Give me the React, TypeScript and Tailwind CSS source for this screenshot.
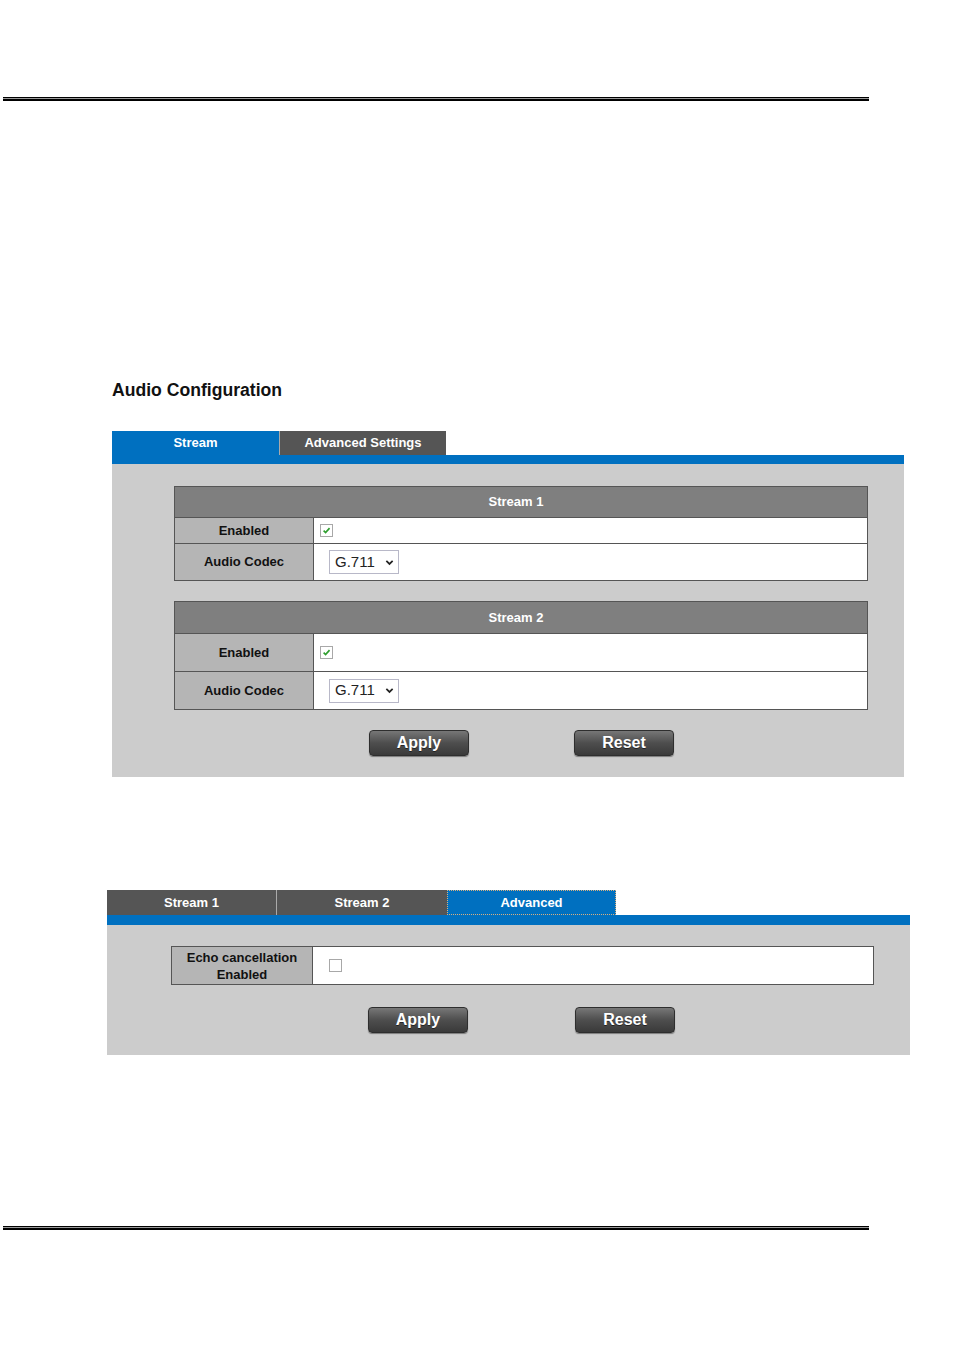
import React from "react"

const font = { fontFamily: '"Liberation Sans", Arial, sans-serif' }

function Rule() {
  return (
    <div className="ml-[3px] w-[866px]">
      <div className="h-px bg-black" />
      <div className="h-px bg-[#9a9a9a]" />
      <div className="h-[2px] bg-black" />
    </div>
  )
}

function Check({ checked }: { checked: boolean }) {
  return (
    <span className="inline-flex h-[13px] w-[13px] items-center justify-center border border-[#a8a8a8] bg-white">
      {checked && (
        <svg viewBox="0 0 10 10" className="h-[9px] w-[9px]">
          <path d="M1.8 5.2 L4 7.4 L8.4 2.4" fill="none" stroke="#2e9e2e" strokeWidth="1.8" />
        </svg>
      )}
    </span>
  )
}

function Codec() {
  return (
    <div className="flex h-[24px] w-[70px] items-center justify-between border border-[#b8b8c8] bg-white pl-[5px] pr-[4px] text-[15px] font-normal text-[#222]">
      <span>G.711</span>
      <svg viewBox="0 0 10 10" className="h-[9px] w-[9px]">
        <path d="M1.5 3.2 L5 6.6 L8.5 3.2" fill="none" stroke="#222" strokeWidth="1.9" />
      </svg>
    </div>
  )
}

function Btn({ label }: { label: string }) {
  return (
    <button className="h-[26px] w-[100px] rounded-[4px] border border-[#2e2e2e] bg-gradient-to-b from-[#777] via-[#4e4e4e] to-[#3a3a3a] text-[16px] font-bold text-white shadow-[0_1px_1px_rgba(0,0,0,0.4)] [text-shadow:0_1px_0_rgba(0,0,0,0.5)]">
      {label}
    </button>
  )
}

function StreamTable({ title, headerH, enabledH, codecH }: { title: string; headerH: string; enabledH: string; codecH: string }) {
  return (
    <div className="w-[694px] border border-[#555] text-[13px] font-bold">
      <div className={`flex items-center justify-center bg-[#7f7f7f] pr-[10px] text-white ${headerH}`}>{title}</div>
      <div className={`flex border-t border-[#555] ${enabledH}`}>
        <div className="flex w-[139px] items-center justify-center border-r border-[#555] bg-[#b5b5b5] text-[#111]">Enabled</div>
        <div className="flex flex-1 items-center bg-white pl-[6px]">
          <Check checked />
        </div>
      </div>
      <div className={`flex border-t border-[#555] ${codecH}`}>
        <div className="flex w-[139px] items-center justify-center border-r border-[#555] bg-[#b5b5b5] text-[#111]">Audio Codec</div>
        <div className="flex flex-1 items-center bg-white pl-[15px]">
          <Codec />
        </div>
      </div>
    </div>
  )
}

export default function App() {
  return (
    <div className="h-[1351px] w-[954px] bg-white pt-[97px]" style={font}>
      <Rule />

      <h1 className="ml-[112px] mt-[277px] h-[24px] text-[17.6px] font-bold leading-[24px] text-[#111]">Audio Configuration</h1>

      {/* Panel 1 */}
      <div className="ml-[112px] mt-[29px] w-[792px]">
        <div className="flex h-[24px] text-[13px] font-bold text-white">
          <div className="flex w-[167px] items-center justify-center bg-[#0070c0]">Stream</div>
          <div className="flex w-[167px] items-center justify-center border-l border-[#aaa] bg-[#555]">Advanced Settings</div>
        </div>
        <div className="h-[9px] bg-[#0070c0]" />
        <div className="bg-[#cccccc] pb-[21px] pl-[62px] pt-[22px]">
          <StreamTable title="Stream 1" headerH="h-[30px]" enabledH="h-[26px]" codecH="h-[37px]" />
          <div className="mt-[20px]">
            <StreamTable title="Stream 2" headerH="h-[31px]" enabledH="h-[38px]" codecH="h-[38px]" />
          </div>
          <div className="mt-[20px] flex gap-[105px] pl-[195px]">
            <Btn label="Apply" />
            <Btn label="Reset" />
          </div>
        </div>
      </div>

      {/* Panel 2 */}
      <div className="ml-[107px] mt-[113px] w-[803px]">
        <div className="flex h-[25px] text-[13px] font-bold text-white">
          <div className="flex w-[169px] items-center justify-center bg-[#555]">Stream 1</div>
          <div className="flex w-[171px] items-center justify-center border-l border-[#aaa] bg-[#555]">Stream 2</div>
          <div className="flex w-[169px] items-center justify-center border border-dotted border-[#d8b080] bg-[#0070c0]">Advanced</div>
        </div>
        <div className="h-[10px] bg-[#0070c0]" />
        <div className="bg-[#cccccc] pb-[22px] pl-[64px] pt-[21px]">
          <div className="flex h-[39px] w-[703px] border border-[#555] text-[13px] font-bold">
            <div className="flex w-[141px] flex-col items-center justify-center border-r border-[#555] bg-[#b5b5b5] leading-[17px] text-[#111]">
              <span>Echo cancellation</span>
              <span>Enabled</span>
            </div>
            <div className="flex flex-1 items-center bg-white pl-[16px]">
              <Check checked={false} />
            </div>
          </div>
          <div className="mt-[22px] flex gap-[107px] pl-[197px]">
            <Btn label="Apply" />
            <Btn label="Reset" />
          </div>
        </div>
      </div>

      <div className="mt-[171px]">
        <Rule />
      </div>
    </div>
  )
}
